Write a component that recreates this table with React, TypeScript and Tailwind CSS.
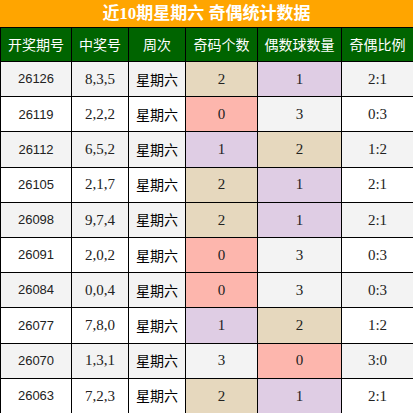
import React from "react";

type Row = {
  issue: string;
  nums: string;
  odd: number;
  even: number;
};

const rows: Row[] = [
  { issue: "26126", nums: "8,3,5", odd: 2, even: 1 },
  { issue: "26119", nums: "2,2,2", odd: 0, even: 3 },
  { issue: "26112", nums: "6,5,2", odd: 1, even: 2 },
  { issue: "26105", nums: "2,1,7", odd: 2, even: 1 },
  { issue: "26098", nums: "9,7,4", odd: 2, even: 1 },
  { issue: "26091", nums: "2,0,2", odd: 0, even: 3 },
  { issue: "26084", nums: "0,0,4", odd: 0, even: 3 },
  { issue: "26077", nums: "7,8,0", odd: 1, even: 2 },
  { issue: "26070", nums: "1,3,1", odd: 3, even: 0 },
  { issue: "26063", nums: "7,2,3", odd: 2, even: 1 },
];

const countBg: Record<number, string> = {
  0: "bg-[#fdb6ad]",
  1: "bg-[#dfcde4]",
  2: "bg-[#e6d8be]",
  3: "bg-[#f3f3f3]",
};

const headers = ["开奖期号", "中奖号", "周次", "奇码个数", "偶数球数量", "奇偶比例"];

const serif = "font-['Liberation_Serif','Noto_Sans_CJK_SC',serif]";
const cjk = "font-['Noto_Sans_CJK_SC',sans-serif]";

export default function App() {
  return (
    <div className="w-[413px] h-[413px] bg-white overflow-hidden">
      <div
        className={`h-[27px] bg-[#ffa500] text-white text-[17px] font-bold flex items-center justify-center leading-none ${serif}`}
      >
        近10期星期六 奇偶统计数据
      </div>
      <table className="w-[413px] table-fixed border-collapse">
        <colgroup>
          <col className="w-[71px]" />
          <col className="w-[57px]" />
          <col className="w-[57px]" />
          <col className="w-[72px]" />
          <col className="w-[84px]" />
          <col className="w-[72px]" />
        </colgroup>
        <thead>
          <tr className="h-[34px] bg-[#006400]">
            {headers.map((h) => (
              <th
                key={h}
                className={`border border-black text-white text-[14px] font-normal text-center p-0 ${cjk}`}
              >
                {h}
              </th>
            ))}
          </tr>
        </thead>
        <tbody>
          {rows.map((r, i) => {
            const rowBg = i % 2 === 0 ? "bg-[#f3f3f3]" : "bg-white";
            return (
              <tr key={r.issue} className="h-[35.2px] text-[#222]">
                <td
                  className={`border border-black text-center p-0 text-[13px] font-['Liberation_Sans_Narrow','Liberation_Sans',sans-serif] ${rowBg}`}
                >
                  {r.issue}
                </td>
                <td className={`border border-black text-center p-0 text-[15px] ${serif} ${rowBg}`}>
                  {r.nums}
                </td>
                <td className={`border border-black text-center p-0 text-[14px] text-black ${cjk} ${rowBg}`}>
                  星期六
                </td>
                <td className={`border border-black text-center p-0 text-[15px] ${serif} ${countBg[r.odd]}`}>
                  {r.odd}
                </td>
                <td className={`border border-black text-center p-0 text-[15px] ${serif} ${countBg[r.even]}`}>
                  {r.even}
                </td>
                <td className={`border border-black text-center p-0 text-[15px] ${serif} ${rowBg}`}>
                  {r.odd}:{r.even}
                </td>
              </tr>
            );
          })}
        </tbody>
      </table>
    </div>
  );
}
